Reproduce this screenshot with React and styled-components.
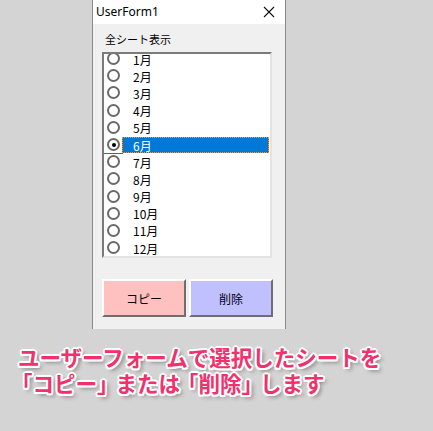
import React from "react";
import styled, { createGlobalStyle } from "styled-components";

const GlobalStyle = createGlobalStyle`
  html, body {
    margin: 0;
    padding: 0;
    background: #d4d4d4;
  }
`;

const months = ["1月", "2月", "3月", "4月", "5月", "6月", "7月", "8月", "9月", "10月", "11月", "12月"];
const selected = 5;

const App = () => {
  return (
    <Page>
      <GlobalStyle />
      <Window>
        <TitleBar>
          <span>UserForm1</span>
          <svg width="12" height="12" viewBox="0 0 12 12">
            <path d="M1 1 L11 11 M11 1 L1 11" stroke="#111" strokeWidth="1.1" />
          </svg>
        </TitleBar>
        <FormBody>
          <Label>全シート表示</Label>
          <ListBox>
            <Rows>
              {months.map((m, i) => (
                <Row key={m} $underline={i === selected}>
                  <Radio $checked={i === selected} />
                  <Item $selected={i === selected}>{m}</Item>
                </Row>
              ))}
            </Rows>
          </ListBox>
          <ButtonRow>
            <FormButton $bg="#ffc0c0">コピー</FormButton>
            <FormButton $bg="#c0c0ff">削除</FormButton>
          </ButtonRow>
        </FormBody>
      </Window>
      <Caption>
        <Line>ユーザーフォームで選択したシートを</Line>
        <Line>
          <Bracket $shift={-7}>「</Bracket>コピー<Bracket $close>」</Bracket>または
          <Bracket $shift={-3}>「</Bracket>削除<Bracket $close>」</Bracket>します
        </Line>
      </Caption>
    </Page>
  );
};

export default App;

const Page = styled.div`
  width: 433px;
  height: 431px;
  overflow: hidden;
  display: flex;
  flex-direction: column;
`;

const Window = styled.div`
  margin-left: 92px;
  width: 192px;
  height: 329px;
  border-left: 1px solid #8a8a8a;
  border-right: 1px solid #8a8a8a;
  background: #f0f0f0;
  display: flex;
  flex-direction: column;
  box-sizing: content-box;
`;

const TitleBar = styled.div`
  height: 24px;
  background: #ffffff;
  display: flex;
  align-items: center;
  justify-content: space-between;
  padding: 0 10px 0 3px;
  font-family: "Noto Sans", "Open Sans", sans-serif;
  font-size: 12px;
  color: #000;
  span {
    margin-top: -2px;
  }
`;

const FormBody = styled.div`
  flex: 1;
  display: flex;
  flex-direction: column;
  padding: 0 0 0 9px;
`;

const Label = styled.div`
  font-family: "Noto Sans CJK JP", sans-serif;
  font-size: 11px;
  height: 28px;
  line-height: 30px;
  padding-left: 3px;
  color: #000;
`;

const ListBox = styled.div`
  width: 170px;
  height: 206px;
  box-sizing: border-box;
  background: #fff;
  border-top: 2px solid #7a7a7a;
  border-left: 2px solid #7a7a7a;
  border-right: 2px solid #e3e3e3;
  border-bottom: 2px solid #e3e3e3;
  overflow: hidden;
`;

const Rows = styled.div`
  margin-top: -4px;
  display: flex;
  flex-direction: column;
`;

const Row = styled.div`
  height: 17.2px;
  display: flex;
  align-items: center;
  position: relative;
  &::after {
    content: "";
    display: ${(p) => (p.$underline ? "block" : "none")};
    position: absolute;
    left: 0;
    bottom: -1px;
    width: 19px;
    height: 1px;
    background: #0078d7;
  }
`;

const Radio = styled.span`
  width: 13px;
  height: 13px;
  box-sizing: border-box;
  border: 2px solid #6a6a6a;
  border-radius: 50%;
  background: #fff;
  margin-left: 3px;
  flex: none;
  display: flex;
  align-items: center;
  justify-content: center;
  &::before {
    content: "";
    display: ${(p) => (p.$checked ? "block" : "none")};
    width: 4px;
    height: 4px;
    border-radius: 50%;
    background: #000;
  }
`;

const Item = styled.span`
  margin-left: 2px;
  flex: 1;
  height: 16px;
  box-sizing: border-box;
  padding-left: 10px;
  font-family: "Noto Sans CJK JP", sans-serif;
  font-size: 12px;
  line-height: 15px;
  color: ${(p) => (p.$selected ? "#fff" : "#000")};
  background: ${(p) => (p.$selected ? "#0078d7" : "transparent")};
  border: 1px ${(p) => (p.$selected ? "dotted #ff9a1e" : "solid transparent")};
  margin-right: 1px;
`;

const ButtonRow = styled.div`
  display: flex;
  gap: 3px;
  margin-top: 21px;
`;

const FormButton = styled.div`
  width: 84px;
  height: 38px;
  box-sizing: border-box;
  background: ${(p) => p.$bg};
  border-top: 2px solid #ffffff;
  border-left: 2px solid #ffffff;
  border-right: 2px solid #6e6e6e;
  border-bottom: 2px solid #6e6e6e;
  display: flex;
  align-items: center;
  justify-content: center;
  font-family: "Noto Sans CJK JP", sans-serif;
  font-size: 12px;
  color: #000;
`;

const Caption = styled.div`
  margin-top: 15px;
  padding-left: 18px;
  display: flex;
  flex-direction: column;
  font-family: "Noto Sans CJK JP", sans-serif;
  font-weight: 700;
  font-size: 21.5px;
  color: #f2306c;
  white-space: nowrap;
  text-shadow: 2px 0 #fff, -2px 0 #fff, 0 2px #fff, 0 -2px #fff,
    1.5px 1.5px #fff, -1.5px -1.5px #fff, 1.5px -1.5px #fff, -1.5px 1.5px #fff,
    3px 3px 4px rgba(0, 0, 0, 0.45);
`;

const Line = styled.div`
  height: 26px;
  line-height: 26px;
`;

const Bracket = styled.span`
  margin-left: ${(p) => (p.$close ? 0 : p.$shift)}px;
  margin-right: ${(p) => (p.$close ? -3 : 0)}px;
`;
